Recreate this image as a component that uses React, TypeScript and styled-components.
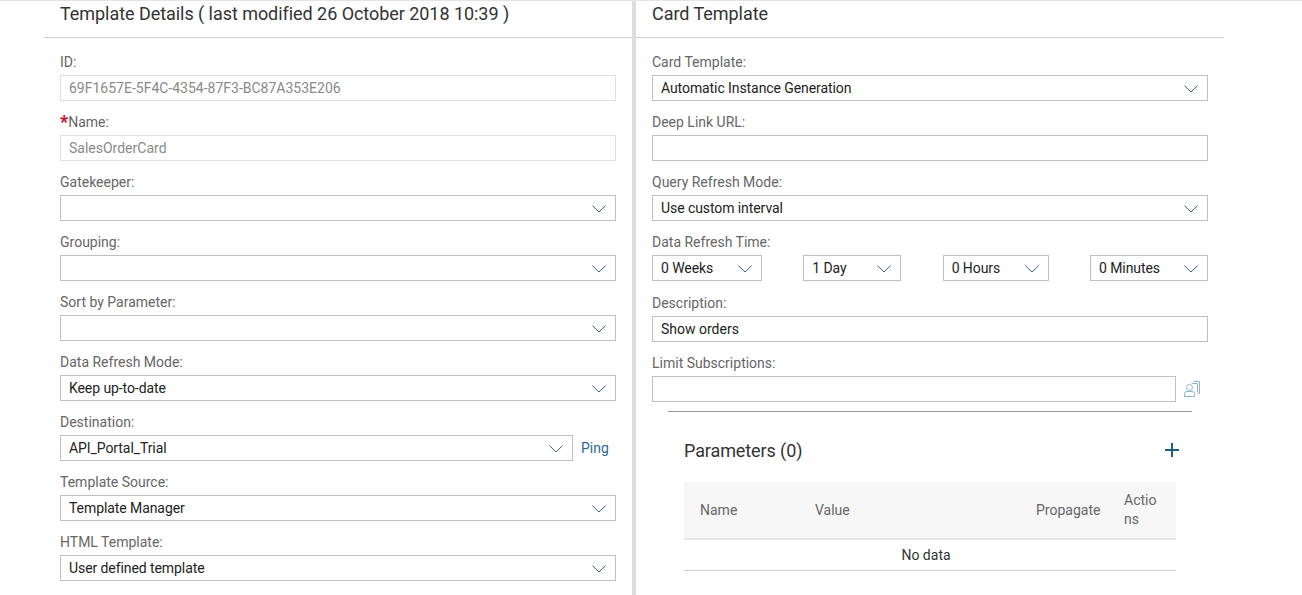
import React from "react";
import styled, { createGlobalStyle } from "styled-components";

const GlobalStyle = createGlobalStyle`
  html, body {
    margin: 0;
    height: 595px;
    overflow: hidden;
    background: #ffffff;
    font-family: "Roboto", "Liberation Sans", sans-serif;
  }
`;

const Chevron = () => (
  <ChevronIcon viewBox="0 0 14 8" aria-hidden="true">
    <path d="M0.5 0.7 L7 7 L13.5 0.7" fill="none" stroke="#346187" strokeWidth="1" />
  </ChevronIcon>
);

const UserListIcon = () => (
  <PickerIcon viewBox="0 0 17 16" aria-hidden="true">
    <g fill="none" stroke="#8fb4cc" strokeWidth="1">
      <path d="M9.5 0.5 H15.5 V12.5 H14" />
      <path d="M7.5 2.5 H13.5 V11.5" />
      <circle cx="5.5" cy="6.5" r="3" />
      <path d="M0.5 15.5 V12.5 Q0.5 10.5 3 10.5 H8 Q10.5 10.5 10.5 12.5 V15.5 Z" />
    </g>
  </PickerIcon>
);

const PlusIcon = () => (
  <AddIcon viewBox="0 0 14 14" aria-hidden="true">
    <path d="M7 0 V14 M0 7 H14" stroke="#1d5e87" strokeWidth="2" fill="none" />
  </AddIcon>
);

interface ISelectProps {
  value?: string;
  width?: number;
}

const Select: React.FC<ISelectProps> = ({ value, width }) => (
  <SelectBox $width={width}>
    <span>{value}</span>
    <Chevron />
  </SelectBox>
);

export default function App() {
  return (
    <>
      <GlobalStyle />
      <Page>
        <LeftPanel>
          <PanelHeader>Template Details ( last modified 26 October 2018 10:39 )</PanelHeader>
          <Form>
            <Field>
              <Label>ID:</Label>
              <TextBox $disabled>69F1657E-5F4C-4354-87F3-BC87A353E206</TextBox>
            </Field>
            <Field>
              <Label>
                <Required>*</Required>Name:
              </Label>
              <TextBox $disabled>SalesOrderCard</TextBox>
            </Field>
            <Field>
              <Label>Gatekeeper:</Label>
              <Select />
            </Field>
            <Field>
              <Label>Grouping:</Label>
              <Select />
            </Field>
            <Field>
              <Label>Sort by Parameter:</Label>
              <Select />
            </Field>
            <Field>
              <Label>Data Refresh Mode:</Label>
              <Select value="Keep up-to-date" />
            </Field>
            <Field>
              <Label>Destination:</Label>
              <Row>
                <Select value="API_Portal_Trial" width={513} />
                <PingLink>Ping</PingLink>
              </Row>
            </Field>
            <Field>
              <Label>Template Source:</Label>
              <Select value="Template Manager" />
            </Field>
            <Field>
              <Label>HTML Template:</Label>
              <Select value="User defined template" />
            </Field>
          </Form>
        </LeftPanel>
        <RightPanel>
          <PanelHeader>Card Template</PanelHeader>
          <Form>
            <Field>
              <Label>Card Template:</Label>
              <Select value="Automatic Instance Generation" />
            </Field>
            <Field>
              <Label>Deep Link URL:</Label>
              <TextBox />
            </Field>
            <Field>
              <Label>Query Refresh Mode:</Label>
              <Select value="Use custom interval" />
            </Field>
            <TimeField>
              <Label>Data Refresh Time:</Label>
              <TimeRow>
                <Select value="0 Weeks" width={110} />
                <Select value="1 Day" width={98} />
                <Select value="0 Hours" width={106} />
                <Select value="0 Minutes" width={118} />
              </TimeRow>
            </TimeField>
            <Field>
              <Label>Description:</Label>
              <TextBox>Show orders</TextBox>
            </Field>
            <LastField>
              <Label>Limit Subscriptions:</Label>
              <Row>
                <LimitBox />
                <UserListIcon />
              </Row>
            </LastField>
          </Form>
          <Parameters>
            <ParametersHead>
              <ParametersTitle>Parameters (0)</ParametersTitle>
              <PlusIcon />
            </ParametersHead>
            <TableHead>
              <HeadCell>Name</HeadCell>
              <HeadCell>Value</HeadCell>
              <PropagateCell>Propagate</PropagateCell>
              <HeadCell>Actions</HeadCell>
            </TableHead>
            <EmptyRow>No data</EmptyRow>
          </Parameters>
        </RightPanel>
      </Page>
    </>
  );
}

const Page = styled.div`
  display: flex;
  width: 1302px;
  height: 595px;
  padding-left: 44px;
  box-sizing: border-box;
  border-top: 1px solid #e5e5e5;
  overflow: hidden;
`;

const LeftPanel = styled.section`
  width: 588px;
  flex: none;
`;

const RightPanel = styled.section`
  width: 592px;
  flex: none;
  box-sizing: border-box;
  border-left: 4px solid #dddddd;
`;

const PanelHeader = styled.h2`
  margin: 0;
  height: 37px;
  box-sizing: border-box;
  padding: 1px 0 0 16px;
  border-bottom: 1px solid #cccccc;
  font-size: 18px;
  font-weight: 400;
  line-height: 24px;
  letter-spacing: -0.05px;
  color: #333333;
`;

const Form = styled.div`
  display: flex;
  flex-direction: column;
  padding: 14px 16px 0;
`;

const Field = styled.div`
  height: 60px;
  flex: none;
`;

const TimeField = styled(Field)`
  height: 61px;
`;

const LastField = styled(Field)`
  height: 49px;
`;

const Label = styled.div`
  height: 23px;
  font-size: 14px;
  line-height: 20px;
  color: #666666;
`;

const Required = styled.span`
  color: #d0021b;
  font-size: 18px;
  line-height: 14px;
  font-weight: 700;
  vertical-align: -1px;
`;

const TextBox = styled.div<{ $disabled?: boolean }>`
  height: 26px;
  box-sizing: border-box;
  padding: 0 8px;
  border: 1px solid ${(props) => (props.$disabled ? "#e0e0e0" : "#bfbfbf")};
  font-size: 14px;
  line-height: 24px;
  color: ${(props) => (props.$disabled ? "#8a8a8a" : "#222222")};
`;

const LimitBox = styled(TextBox)`
  width: 524px;
  flex: none;
`;

const SelectBox = styled.div<{ $width?: number }>`
  display: flex;
  align-items: center;
  justify-content: space-between;
  flex: none;
  width: ${(props) => (props.$width ? `${props.$width}px` : "100%")};
  height: 26px;
  box-sizing: border-box;
  padding: 0 9px 0 8px;
  border: 1px solid #bfbfbf;
  font-size: 14px;
  letter-spacing: -0.08px;
  color: #222222;
`;

const ChevronIcon = styled.svg`
  width: 14px;
  height: 8px;
  flex: none;
  margin-top: 1px;
`;

const Row = styled.div`
  display: flex;
  align-items: center;
`;

const TimeRow = styled(Row)`
  justify-content: space-between;
`;

const PingLink = styled.a`
  margin-left: 8px;
  font-size: 14px;
  color: #2a6a94;
`;

const PickerIcon = styled.svg`
  width: 17px;
  height: 16px;
  margin-left: 8px;
  flex: none;
`;

const Parameters = styled.div`
  margin: 9px 48px 0 32px;
  padding: 0 16px;
  width: 492px;
  border-top: 1px solid #999999;
`;

const ParametersHead = styled.div`
  display: flex;
  align-items: center;
  justify-content: space-between;
  height: 70px;
  padding: 6px 0 0;
  box-sizing: border-box;
`;

const ParametersTitle = styled.h3`
  margin: 0;
  font-size: 18px;
  font-weight: 400;
  letter-spacing: -0.1px;
  color: #333333;
`;

const AddIcon = styled.svg`
  width: 14px;
  height: 14px;
  margin-right: -3px;
`;

const TableHead = styled.div`
  display: grid;
  grid-template-columns: 115px 221px 88px 68px;
  align-items: center;
  height: 58px;
  box-sizing: border-box;
  background: #f7f7f7;
  border-bottom: 2px solid #e5e5e5;
`;

const HeadCell = styled.div`
  padding: 0 16px;
  font-size: 14px;
  line-height: 19px;
  color: #666666;
  word-break: break-all;
`;

const PropagateCell = styled(HeadCell)`
  padding-right: 0;
  word-break: normal;
`;

const EmptyRow = styled.div`
  height: 31px;
  box-sizing: border-box;
  padding-right: 8px;
  border-bottom: 1px solid #cccccc;
  font-size: 14px;
  line-height: 30px;
  text-align: center;
  color: #333333;
`;
